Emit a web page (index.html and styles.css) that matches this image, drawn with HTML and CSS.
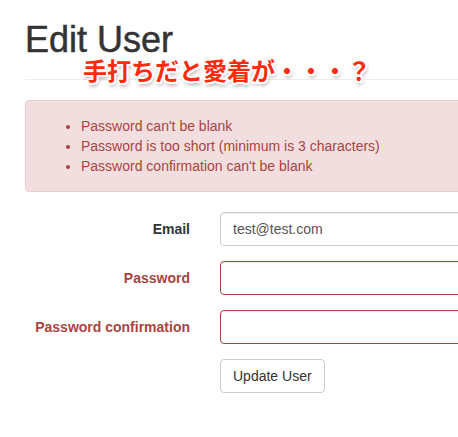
FILE: index.html
```html
<!DOCTYPE html>
<html lang="ja">
<head>
<meta charset="utf-8">
<title>Edit User</title>
<link rel="stylesheet" href="styles.css">
</head>
<body>
<div class="container">
  <div class="page-header">
    <h1>Edit User</h1>
  </div>
  <div class="alert">
    <ul>
      <li>Password can't be blank</li>
      <li>Password is too short (minimum is 3 characters)</li>
      <li>Password confirmation can't be blank</li>
    </ul>
  </div>
  <form class="form">
    <div class="form-group">
      <label class="label">Email</label>
      <div class="field"><input class="input" type="text" value="test@test.com"></div>
    </div>
    <div class="form-group has-error">
      <label class="label">Password</label>
      <div class="field"><input class="input" type="password"></div>
    </div>
    <div class="form-group has-error">
      <label class="label">Password confirmation</label>
      <div class="field"><input class="input" type="password"></div>
    </div>
    <div class="form-group">
      <div class="label"></div>
      <div class="field"><button class="btn" type="button">Update User</button></div>
    </div>
  </form>
  <div class="caption">手打ちだと愛着が・・・？</div>
</div>
</body>
</html>
```

FILE: styles.css
```css
html, body {
  margin: 0;
  padding: 0;
  overflow: hidden;
  background: #fff;
}
body {
  font-family: "Liberation Sans", Arial, sans-serif;
  font-size: 14px;
  line-height: 20px;
  color: #333;
}
.container {
  position: relative;
  width: 1140px;
  padding: 20px 25px 0;
}
.page-header {
  margin: 0 0 20px;
  padding-bottom: 9px;
  border-bottom: 1px solid #eee;
}
.page-header h1 {
  margin: 0 0 10px;
  font-size: 36px;
  line-height: 39.6px;
  font-weight: 500;
  color: #333;
  -webkit-text-stroke: 0.5px #333;
}
.alert {
  margin-bottom: 20px;
  padding: 15px;
  border: 1px solid #ebccd1;
  border-radius: 4px;
  background: #f2dede;
  color: #a94442;
}
.alert ul {
  margin: 0;
  padding-left: 40px;
}
.form-group {
  display: flex;
  align-items: flex-start;
  margin-bottom: 15px;
}
.label {
  width: 165px;
  flex: none;
  padding-top: 7px;
  text-align: right;
  font-weight: bold;
  color: #333;
}
.has-error .label {
  color: #a94442;
}
.field {
  flex: 1;
  margin-left: 30px;
}
.input {
  display: block;
  box-sizing: border-box;
  width: 100%;
  height: 34px;
  padding: 6px 12px;
  border: 1px solid #ccc;
  border-radius: 4px;
  box-shadow: inset 0 1px 1px rgba(0,0,0,.075);
  font-family: "Liberation Sans", Arial, sans-serif;
  font-size: 14px;
  color: #555;
  background: #fff;
}
.has-error .input {
  border-color: #a94442;
}
.btn {
  height: 34px;
  padding: 6px 12px;
  border: 1px solid #ccc;
  border-radius: 4px;
  background: #fff;
  font-family: "Liberation Sans", Arial, sans-serif;
  font-size: 14px;
  line-height: 20px;
  color: #333;
}
.caption {
  position: absolute;
  left: 83px;
  top: 60px;
  font-family: "Noto Sans CJK JP", sans-serif;
  font-weight: bold;
  font-size: 24px;
  line-height: 20px;
  color: #ff2a0a;
  white-space: nowrap;
  text-shadow:
    2px 0 0 #fff, -2px 0 0 #fff, 0 2px 0 #fff, 0 -2px 0 #fff,
    1.5px 1.5px 0 #fff, -1.5px 1.5px 0 #fff, 1.5px -1.5px 0 #fff, -1.5px -1.5px 0 #fff,
    1px 3px 4px rgba(0,0,0,.45);
}
```
